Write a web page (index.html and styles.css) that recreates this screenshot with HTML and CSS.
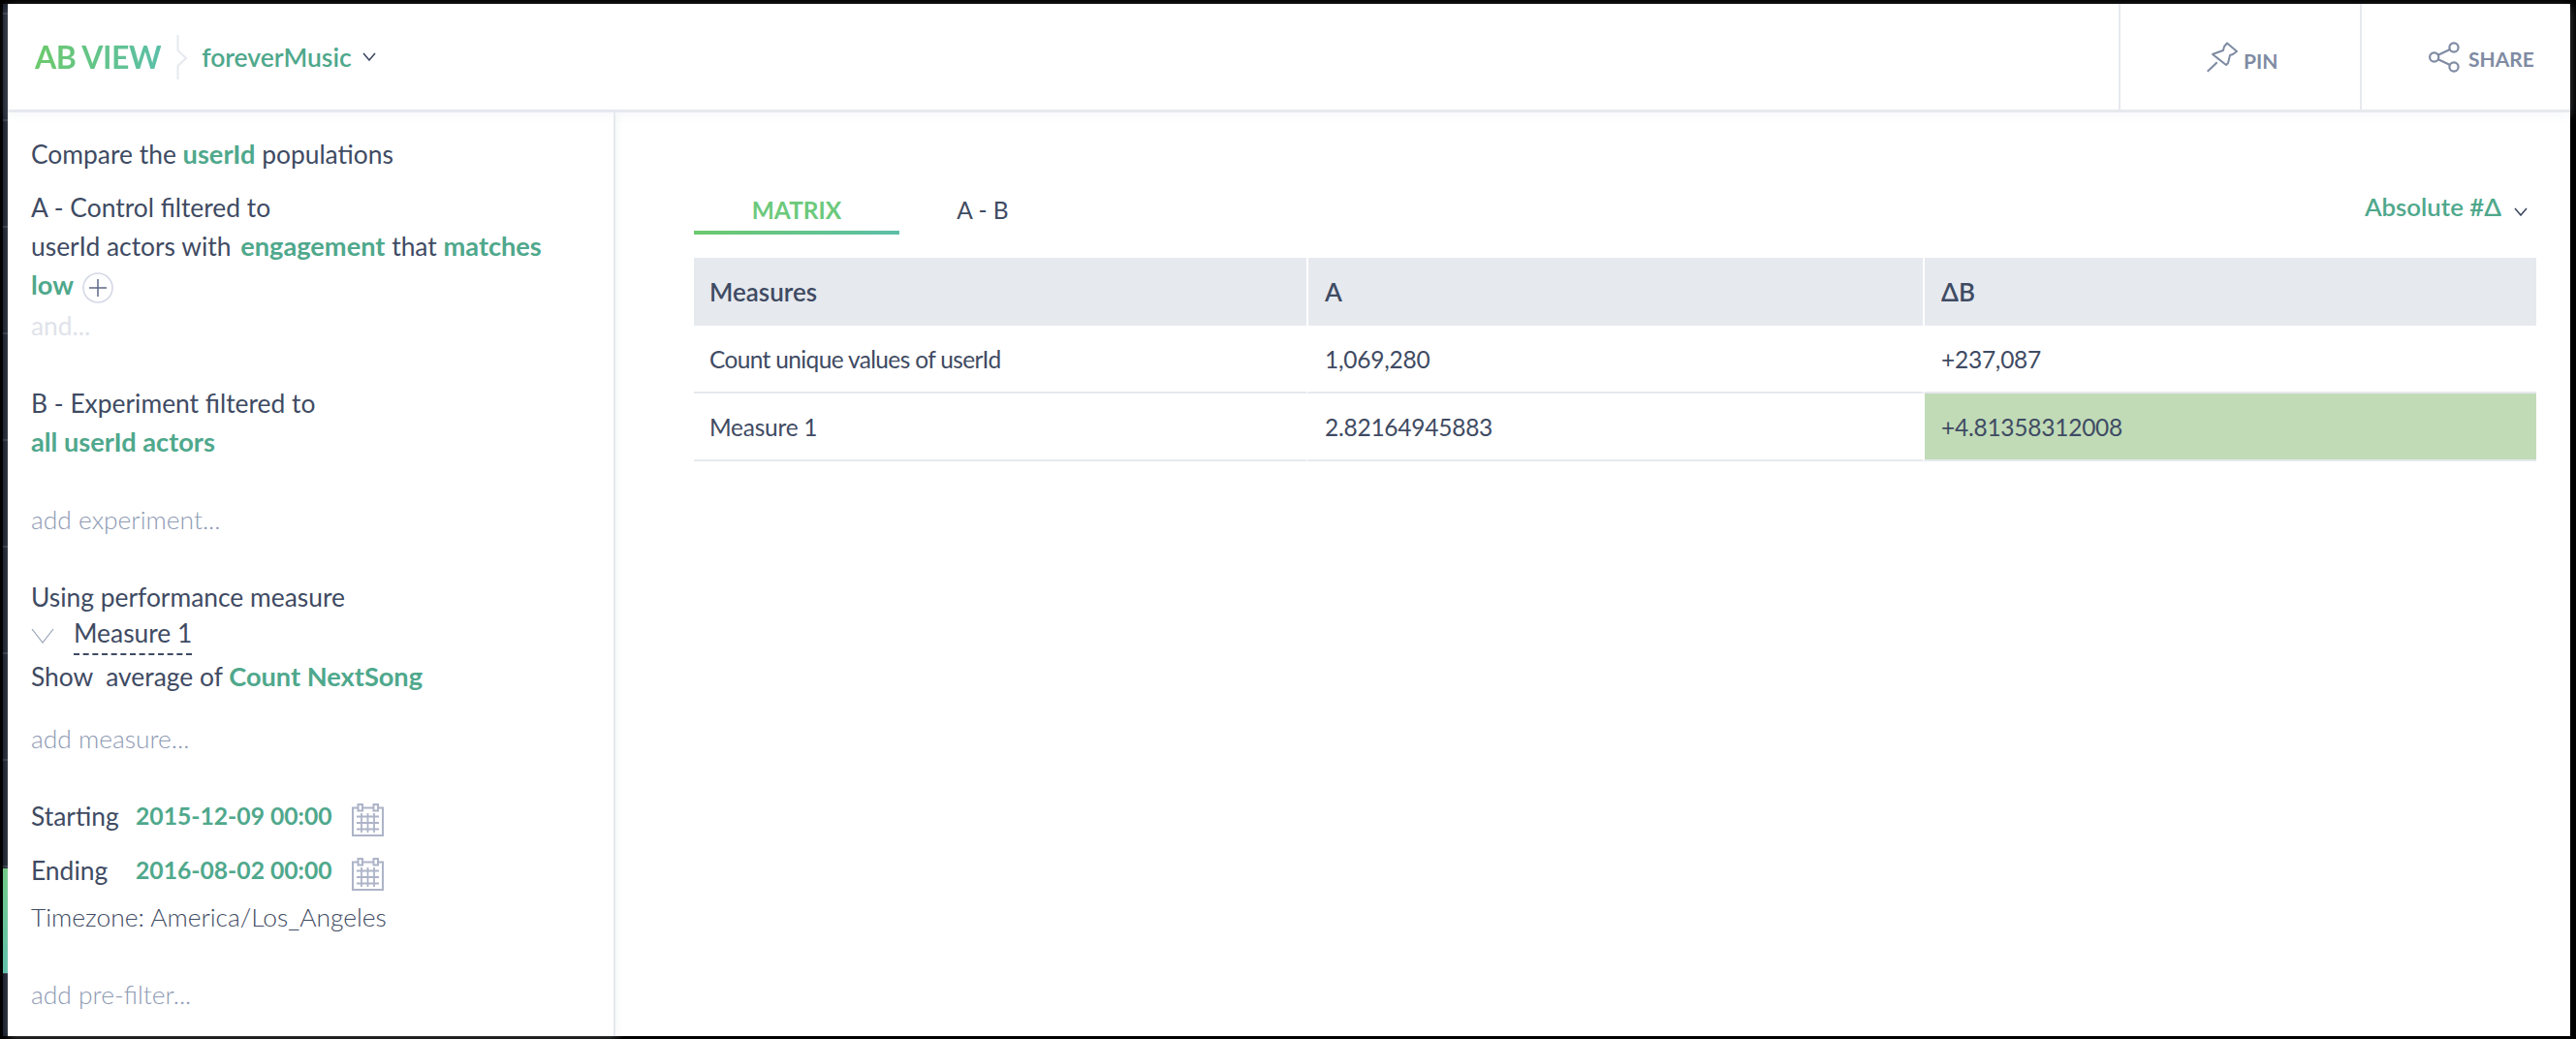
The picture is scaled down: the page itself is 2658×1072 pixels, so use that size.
FILE: index.html
```html
<!DOCTYPE html>
<html lang="en">
<head>
  <meta charset="UTF-8">
  <title>AB View</title>
  <link rel="stylesheet" href="styles.css">
</head>
<body>
  <div class="frame">
    <div class="rail"><div class="rail-mark"></div></div>
    <div class="app">
      <header class="topbar">
        <div class="brand">AB VIEW</div>
        <svg class="crumb" width="12" height="46" viewBox="0 0 12 46"><path d="M1.5 0V16L10 24L1.5 32V46" fill="none" stroke="#e6e9ee" stroke-width="2"/></svg>
        <div class="view-name">foreverMusic</div>
        <svg class="chev" width="14" height="9" viewBox="0 0 14 9"><path d="M1 1L7 8L13 1" fill="none" stroke="#3f4b63" stroke-width="1.6"/></svg>
        <div class="top-actions">
          <div class="top-btn pin">
            <svg width="33" height="33" viewBox="0 0 33 33"><path d="M1.7 31.7L11.7 22.3M7 14L18 10L19 6L22 2.5L32 11L28 14L25 15L23 23L21 25Z" fill="none" stroke="#7f8ba3" stroke-width="2" stroke-linejoin="round"/></svg>
            <span>PIN</span>
          </div>
          <div class="top-btn share">
            <svg width="32" height="32" viewBox="0 0 32 32"><g fill="none" stroke="#7f8ba3" stroke-width="2.2"><circle cx="5.7" cy="16" r="4.6"/><circle cx="26" cy="6" r="4.6"/><circle cx="26" cy="26" r="4.6"/><path d="M9.8 13.8L22 8M9.8 18.2L22 24"/></g></svg>
            <span>SHARE</span>
          </div>
        </div>
      </header>
      <div class="content">
        <aside class="side">
          <p class="line">Compare the <b>userId</b> populations</p>
          <p class="line gap-15">A - Control filtered to</p>
          <p class="line">userId actors with&nbsp;<b class="attr">engagement</b> that <b>matches</b></p>
          <p class="line"><b>low</b> <svg class="plus" width="32" height="32" viewBox="0 0 32 32"><circle cx="16" cy="16" r="15" fill="none" stroke="#d5d9e6" stroke-width="1.6"/><path d="M16 7V25M7 16H25" stroke="#5d6a85" stroke-width="1.5"/></svg></p>
          <p class="line faint gap-2">and...</p>
          <p class="line gap-40">B - Experiment filtered to</p>
          <p class="line"><b>all userId actors</b></p>
          <p class="line hint gap-40">add experiment...</p>
          <p class="line gap-40">Using performance measure</p>
          <div class="line measure">
            <svg width="24" height="16" viewBox="0 0 24 16"><path d="M1 1L12 15L23 1" fill="none" stroke="#98a2b8" stroke-width="1.2"/></svg>
            <span class="measure-name">Measure 1</span>
          </div>
          <p class="line gap-2">Show&nbsp; average of <b>Count NextSong</b></p>
          <p class="line hint gap-24">add measure...</p>
          <div class="line date gap-40">
            <span class="date-label">Starting</span><b>2015-12-09 00:00</b>
            <svg class="cal" width="34" height="34" viewBox="0 0 34 34"><use href="#calendar"/></svg>
          </div>
          <div class="line date gap-16">
            <span class="date-label">Ending</span><b>2016-08-02 00:00</b>
            <svg class="cal" width="34" height="34" viewBox="0 0 34 34"><use href="#calendar"/></svg>
          </div>
          <p class="line tz gap-8">Timezone: America/Los_Angeles</p>
          <p class="line hint gap-40">add pre-filter...</p>
        </aside>
        <main class="main">
          <div class="toolbar">
            <div class="tab active">MATRIX</div>
            <div class="tab">A - B</div>
            <div class="mode">Absolute #Δ<svg class="chev" width="14" height="9" viewBox="0 0 14 9"><path d="M1 1L7 8L13 1" fill="none" stroke="#3f4b63" stroke-width="1.6"/></svg></div>
          </div>
          <table class="matrix">
            <thead>
              <tr><th>Measures</th><th>A</th><th>ΔB</th></tr>
            </thead>
            <tbody>
              <tr><td class="tight">Count unique values of userId</td><td>1,069,280</td><td>+237,087</td></tr>
              <tr><td>Measure 1</td><td>2.82164945883</td><td class="up">+4.81358312008</td></tr>
            </tbody>
          </table>
        </main>
      </div>
    </div>
  </div>
  <svg class="defs" width="0" height="0">
    <symbol id="calendar" viewBox="0 0 34 34">
      <g fill="none" stroke="#adb4c8" stroke-width="2">
        <path d="M2 4.5H33V33H2Z"/>
        <path d="M7.5 1H12V7.5H7.5ZM23.5 1H28V7.5H23.5Z" fill="#fff"/>
        <path d="M6 13.5H29M6 20H29M6 26.5H29M11 10V30M17.5 10V30M24 10V30" stroke-width="1.8"/>
      </g>
    </symbol>
  </svg>
</body>
</html>
```

FILE: styles.css
```css
html, body {
  margin: 0;
  height: 100%;
  background: #000;
}
body {
  font-family: Lato, "Noto Sans", sans-serif;
  font-size: 26.4px;
  color: #3f4b63;
  overflow: hidden;
}
.defs {
  position: absolute;
}
.frame {
  display: flex;
  height: 1072px;
  padding: 4px 6px 3px 3px;
  box-sizing: border-box;
}
.rail {
  width: 5px;
  flex: none;
  background: linear-gradient(#1b222e 108px, #333b48 108px) 0 11px / 100% 110px;
  padding-top: 892px;
  box-sizing: border-box;
}
.rail-mark {
  height: 108px;
  background: linear-gradient(#6cc884, #5bbfa8);
}
.app {
  flex: 1;
  display: flex;
  flex-direction: column;
  background: #fff;
  min-width: 0;
}
.topbar {
  display: flex;
  align-items: center;
  height: 112px;
  flex: none;
  box-sizing: border-box;
  padding-left: 28px;
  border-bottom: 3px solid #e6e9ee;
  box-shadow: 0 3px 10px rgba(230, 233, 238, 0.3);
}
.brand {
  font-size: 32px;
  font-weight: 700;
  letter-spacing: -0.5px;
  background: linear-gradient(90deg, #6cc96c, #5bbfa8);
  -webkit-background-clip: text;
  background-clip: text;
  color: transparent;
}
.crumb {
  margin: 0 14px 0 16px;
}
.view-name {
  font-size: 26.5px;
  font-weight: 600;
  color: #4fa88c;
}
.chev {
  margin-left: 11px;
}
.top-actions {
  margin-left: auto;
  display: flex;
  height: 100%;
}
.top-btn {
  display: flex;
  align-items: center;
  border-left: 2px solid #e6e9ee;
  box-sizing: border-box;
  font-size: 21px;
  font-weight: 700;
  color: #7f8ba3;
}
.pin {
  width: 249px;
  padding-left: 88px;
  gap: 6px;
}
.pin span {
  margin-top: 7px;
}
.share {
  width: 217px;
  padding-left: 69px;
  gap: 9px;
}
.share span {
  margin-top: 3px;
}
.content {
  flex: 1;
  display: flex;
  min-height: 0;
}
.side {
  width: 627px;
  flex: none;
  box-sizing: border-box;
  padding: 23px 0 0 24px;
  border-right: 2px solid #e6e9ee;
  box-shadow: 2px 0 8px rgba(230, 233, 238, 0.4);
}
.line {
  margin: 0;
  height: 40px;
  line-height: 40px;
  white-space: nowrap;
}
.line b {
  font-size: 27.2px;
  font-weight: 700;
  color: #4fa88c;
}
.line .attr {
  margin-left: 3px;
}
.plus {
  vertical-align: -9px;
  margin-left: 2px;
}
.faint {
  color: #dfe3ea;
}
.hint {
  color: #8e9ab3;
  font-weight: 300;
}
.tz {
  font-weight: 300;
}
.gap-2 { margin-top: 2px; }
.gap-8 { margin-top: 8px; }
.gap-15 { margin-top: 15px; }
.gap-16 { margin-top: 16px; }
.gap-24 { margin-top: 24px; }
.gap-40 { margin-top: 40px; }
.measure {
  display: flex;
  align-items: center;
}
.measure-name {
  margin-left: 20px;
  line-height: 34px;
  height: 38px;
  border-bottom: 2px dashed #3f4b63;
  width: 122px;
}
.date {
  display: flex;
  align-items: flex-start;
}
.date b {
  font-size: 24.7px;
}
.date-label {
  width: 108px;
}
.cal {
  margin: 7px 0 0 19px;
}
.main {
  flex: 1;
  min-width: 0;
  padding: 0 35px 0 81px;
}
.toolbar {
  display: flex;
  height: 150px;
  box-sizing: border-box;
  padding-top: 81px;
  align-items: flex-start;
}
.tab {
  width: 212px;
  line-height: 40px;
  font-size: 24.5px;
  text-align: center;
}
.tab.active {
  font-weight: 700;
  color: #6cc97c;
  border-bottom: 4px solid;
  border-image: linear-gradient(90deg, #6cc96c, #5bbfa8) 1;
  height: 41px;
}
.tab + .tab {
  width: 116px;
  margin-left: 28px;
}
.mode {
  margin-left: auto;
  margin-top: -4px;
  line-height: 40px;
  font-size: 25.8px;
  color: #4fa88c;
  font-weight: 600;
  padding-right: 9px;
}
.mode .chev {
  margin-left: 13px;
}
.matrix {
  width: 100%;
  table-layout: fixed;
  border-collapse: separate;
  border-spacing: 0;
}
.matrix th, .matrix td {
  height: 70px;
  padding: 0 15px 0 17px;
  box-sizing: border-box;
  text-align: left;
  border-left: 2px solid #fff;
}
.matrix th:first-child, .matrix td:first-child {
  border-left: 0;
  width: 632px;
  padding-left: 16px;
}
.matrix th:nth-child(2), .matrix td:nth-child(2) {
  width: 636px;
}
.matrix th {
  background: #e6e9ee;
  font-size: 26px;
  font-weight: 600;
}
.matrix td {
  font-size: 24.5px;
  letter-spacing: -0.25px;
  border-bottom: 2px solid #e6e9ee;
}
.matrix .tight {
  letter-spacing: -0.65px;
}
.matrix .up {
  background: #c1dbb7;
}
```
